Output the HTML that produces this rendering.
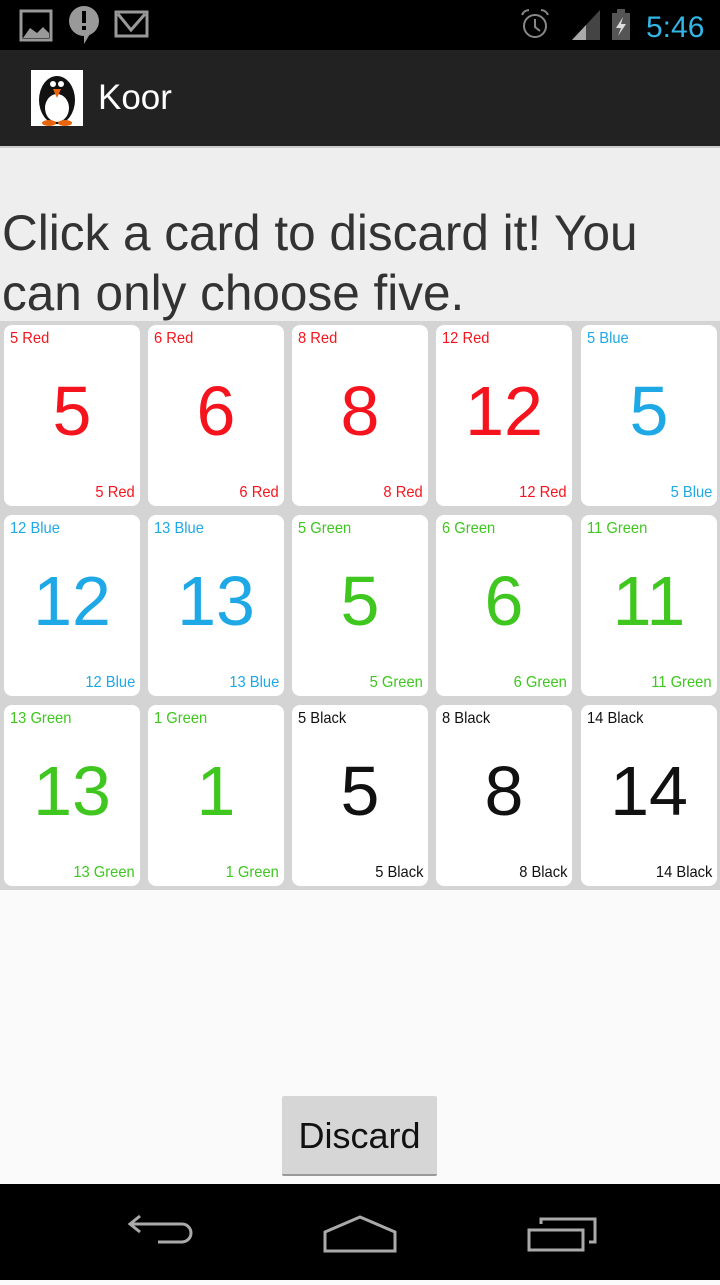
<!DOCTYPE html>
<html><head><meta charset="utf-8"><style>
*{margin:0;padding:0;box-sizing:border-box}
body{width:720px;height:1280px;position:relative;background:#fafafa;font-family:"Liberation Sans","DejaVu Sans",sans-serif;overflow:hidden}
.abs{position:absolute}
#sb{left:0;top:0;width:720px;height:50px;background:#000}
#ab{left:0;top:50px;width:720px;height:96px;background:#222}
#hd{left:0;top:146px;width:720px;height:175px;background:#eee;border-top:2px solid #ccc}
.ln{position:absolute;left:2px;font-size:50px;color:#333;transform-origin:0 0;transform:scaleX(0.99);white-space:nowrap}
#grid{left:0;top:321px;width:720px;height:569px;background:#d4d4d4}
.c{position:absolute;width:136px;height:181px;background:#fff;border-radius:8px}
.c .t{position:absolute;left:6px;top:5px;font-size:16px;transform-origin:0 0;transform:scaleX(0.92)}
.c .b{position:absolute;right:5px;bottom:4px;font-size:16px;transform-origin:100% 0;transform:scaleX(0.92)}
.c .n{position:absolute;left:0;right:0;top:46px;text-align:center;font-size:70px;line-height:80px}
.r{color:#f5141e}.bl{color:#1ea9e6}.g{color:#3fc71f}.k{color:#111}
#btn{left:282px;top:1096px;width:155px;height:80px;background:#d6d6d6;border-radius:2px;border-bottom:2px solid #999;font-size:36px;text-align:center;line-height:80px;color:#111}
#nb{left:0;top:1184px;width:720px;height:96px;background:#000}
</style></head><body>
<div id="sb" class="abs">
<svg width="720" height="50" style="position:absolute;left:0;top:0">
<rect x="21" y="11" width="30" height="29" fill="none" stroke="#999" stroke-width="3"/>
<path d="M23 38 L30 28 L37 33 L43 27 L49 33 L49 38Z" fill="#999"/>
<circle cx="84" cy="21" r="15" fill="#999"/><path d="M84 34 L84 44 L90 34Z" fill="#999"/>
<rect x="82" y="11" width="4" height="12" fill="#000"/><rect x="82" y="26" width="4" height="4" fill="#000"/>
<rect x="116" y="12" width="31" height="24" fill="none" stroke="#999" stroke-width="3"/>
<path d="M118 14 L131 30 L145 14" fill="none" stroke="#999" stroke-width="3"/>
<circle cx="535" cy="26" r="11" fill="none" stroke="#888" stroke-width="2"/>
<path d="M535 19 L535 27 L540 31" fill="none" stroke="#888" stroke-width="2"/>
<path d="M522 15 a8 8 0 0 1 7 -5 M548 15 a8 8 0 0 0 -7 -5" fill="none" stroke="#888" stroke-width="2"/>
<path d="M572 40 L600 10 L600 40Z" fill="#444"/><path d="M572 40 L586 25 L586 40Z" fill="#aaa"/>
<rect x="612" y="13" width="18" height="27" fill="#555"/><rect x="617" y="9" width="8" height="4" fill="#555"/>
<path d="M623 17 L616 28 L621 28 L618 36 L626 24 L621 24Z" fill="#ddd"/>
<text x="646" y="37" font-size="30" fill="#33b5e5" font-family="Liberation Sans">5:46</text>
</svg></div>
<div id="ab" class="abs">
<svg width="52" height="56" style="position:absolute;left:31px;top:20px">
<rect width="52" height="56" fill="#fff"/>
<ellipse cx="26" cy="30" rx="18" ry="24" fill="#111"/>
<ellipse cx="26" cy="38" rx="12" ry="14" fill="#fff"/>
<circle cx="22" cy="14" r="3" fill="#fff"/><circle cx="30" cy="14" r="3" fill="#fff"/>
<path d="M22 19 L30 19 L26 28Z" fill="#e8650c"/>
<ellipse cx="18" cy="53" rx="7" ry="3" fill="#e8650c"/><ellipse cx="34" cy="53" rx="7" ry="3" fill="#e8650c"/>
</svg>
<div style="position:absolute;left:98px;top:28px;font-size:35px;color:#fff">Koor</div>
</div>
<div id="hd" class="abs">
<div class="ln" style="top:56px">Click a card to discard it! You</div>
<div class="ln" style="top:116px">can only choose five.</div>
</div>
<div id="grid" class="abs">
<div class="c" style="left:4px;top:4px"><span class="t r">5 Red</span><div class="n r">5</div><span class="b r">5 Red</span></div>
<div class="c" style="left:148px;top:4px"><span class="t r">6 Red</span><div class="n r">6</div><span class="b r">6 Red</span></div>
<div class="c" style="left:292px;top:4px"><span class="t r">8 Red</span><div class="n r">8</div><span class="b r">8 Red</span></div>
<div class="c" style="left:436px;top:4px"><span class="t r">12 Red</span><div class="n r">12</div><span class="b r">12 Red</span></div>
<div class="c" style="left:581px;top:4px"><span class="t bl">5 Blue</span><div class="n bl">5</div><span class="b bl">5 Blue</span></div>
<div class="c" style="left:4px;top:194px"><span class="t bl">12 Blue</span><div class="n bl">12</div><span class="b bl">12 Blue</span></div>
<div class="c" style="left:148px;top:194px"><span class="t bl">13 Blue</span><div class="n bl">13</div><span class="b bl">13 Blue</span></div>
<div class="c" style="left:292px;top:194px"><span class="t g">5 Green</span><div class="n g">5</div><span class="b g">5 Green</span></div>
<div class="c" style="left:436px;top:194px"><span class="t g">6 Green</span><div class="n g">6</div><span class="b g">6 Green</span></div>
<div class="c" style="left:581px;top:194px"><span class="t g">11 Green</span><div class="n g">11</div><span class="b g">11 Green</span></div>
<div class="c" style="left:4px;top:384px"><span class="t g">13 Green</span><div class="n g">13</div><span class="b g">13 Green</span></div>
<div class="c" style="left:148px;top:384px"><span class="t g">1 Green</span><div class="n g">1</div><span class="b g">1 Green</span></div>
<div class="c" style="left:292px;top:384px"><span class="t k">5 Black</span><div class="n k">5</div><span class="b k">5 Black</span></div>
<div class="c" style="left:436px;top:384px"><span class="t k">8 Black</span><div class="n k">8</div><span class="b k">8 Black</span></div>
<div class="c" style="left:581px;top:384px"><span class="t k">14 Black</span><div class="n k">14</div><span class="b k">14 Black</span></div>
</div>
<div id="btn" class="abs">Discard</div>
<div id="nb" class="abs">
<svg width="720" height="96">
<path d="M140 32 L130 40 L140 48 M130 40 L182 40 a9 9 0 0 1 0 18 L158 58" fill="none" stroke="#aaa" stroke-width="3"/>
<path d="M325 48 L360 33 L395 48 L395 67 L325 67Z" fill="none" stroke="#aaa" stroke-width="3"/>
<rect x="529" y="46" width="54" height="20" fill="none" stroke="#aaa" stroke-width="3"/>
<path d="M541 40 L541 35 L595 35 L595 58 L589 58" fill="none" stroke="#aaa" stroke-width="3"/>
</svg></div>
</body></html>
